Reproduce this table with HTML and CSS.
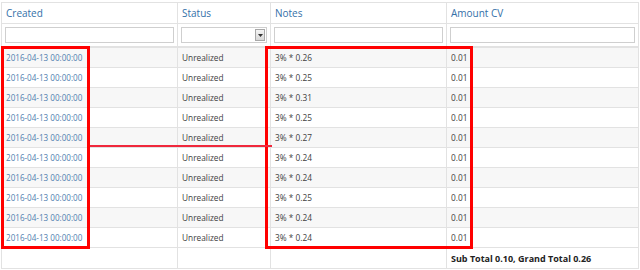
FILE: index.html
```html
<!DOCTYPE html>
<html>
<head>
<meta charset="utf-8">
<link rel="stylesheet" href="styles.css">
</head>
<body>
<div class="wrap">
  <table class="grid">
    <colgroup>
      <col class="c-created"><col class="c-status"><col class="c-notes"><col class="c-amount">
    </colgroup>
    <thead>
      <tr class="head">
        <th>Created</th><th>Status</th><th>Notes</th><th>Amount CV</th>
      </tr>
      <tr class="filters">
        <td><input class="filter" type="text"></td>
        <td><div class="select"><span class="arrow"><svg width="7" height="5" viewBox="0 0 7 5"><path d="M1 1h5L3.5 4z" fill="#333"/></svg></span></div></td>
        <td><input class="filter" type="text"></td>
        <td><input class="filter" type="text"></td>
      </tr>
    </thead>
    <tbody>
      <tr><td><a>2016-04-13 00:00:00</a></td><td>Unrealized</td><td>3% * 0.26</td><td>0.01</td></tr>
      <tr><td><a>2016-04-13 00:00:00</a></td><td>Unrealized</td><td>3% * 0.25</td><td>0.01</td></tr>
      <tr><td><a>2016-04-13 00:00:00</a></td><td>Unrealized</td><td>3% * 0.31</td><td>0.01</td></tr>
      <tr><td><a>2016-04-13 00:00:00</a></td><td>Unrealized</td><td>3% * 0.25</td><td>0.01</td></tr>
      <tr><td><a>2016-04-13 00:00:00</a></td><td>Unrealized</td><td>3% * 0.27</td><td>0.01</td></tr>
      <tr><td><a>2016-04-13 00:00:00</a></td><td>Unrealized</td><td>3% * 0.24</td><td>0.01</td></tr>
      <tr><td><a>2016-04-13 00:00:00</a></td><td>Unrealized</td><td>3% * 0.24</td><td>0.01</td></tr>
      <tr><td><a>2016-04-13 00:00:00</a></td><td>Unrealized</td><td>3% * 0.25</td><td>0.01</td></tr>
      <tr><td><a>2016-04-13 00:00:00</a></td><td>Unrealized</td><td>3% * 0.24</td><td>0.01</td></tr>
      <tr><td><a>2016-04-13 00:00:00</a></td><td>Unrealized</td><td>3% * 0.24</td><td>0.01</td></tr>
    </tbody>
    <tfoot>
      <tr><td></td><td></td><td></td><td class="total">Sub Total 0.10, Grand Total 0.26</td></tr>
    </tfoot>
  </table>
  <div class="mark box-created"></div>
  <div class="mark box-notes"></div>
  <div class="mark link-line"></div>
</div>
</body>
</html>
```
FILE: styles.css
```css
html, body {
  margin: 0;
  padding: 0;
  background: #fff;
}
body {
  font-family: "Open Sans", "Liberation Sans", sans-serif;
  color: #444;
}
.wrap {
  position: relative;
  width: 640px;
  height: 270px;
  padding: 2px 0 0 1px;
  box-sizing: border-box;
}
.grid {
  border-collapse: collapse;
  table-layout: fixed;
  width: 637px;
  border: 1px solid #e2e2e2;
}
.c-created { width: 176px; }
.c-status { width: 93px; }
.c-notes { width: 176px; }
.c-amount { width: 192px; }

.grid th, .grid td {
  border: 1px solid #e2e2e2;
  padding: 0 4px;
  text-align: left;
  white-space: nowrap;
  overflow: hidden;
}
.head th {
  height: 20px;
  font-size: 10px;
  font-weight: normal;
  color: #3470a8;
}
.filters td {
  height: 22px;
  padding: 0 3px;
  border-bottom: 2px solid #e2e2e2;
}
.filter {
  display: block;
  box-sizing: border-box;
  width: 100%;
  height: 16px;
  margin: 0;
  border: 1px solid #cfcfcf;
  background: #fff;
  padding: 0;
}
.select {
  box-sizing: border-box;
  height: 16px;
  border: 1px solid #cfcfcf;
  background: #fff;
  display: flex;
  justify-content: flex-end;
  align-items: center;
  padding-right: 1px;
}
.arrow {
  width: 10px;
  height: 12px;
  box-sizing: border-box;
  border: 1px solid #a8a8a8;
  background: linear-gradient(#f4f4f4, #d8d8d8);
  display: flex;
  align-items: center;
  justify-content: center;
}
tbody td {
  height: 19px;
  font-size: 8.3px;
  color: #404040;
}
tbody tr:nth-child(odd) td {
  background: #f7f7f7;
}
tbody a {
  color: #5080b0;
  font-size: 8.1px;
}
tfoot td {
  height: 20px;
  font-size: 9px;
}
.total {
  font-weight: bold;
  color: #222;
}

.mark {
  position: absolute;
  box-sizing: border-box;
}
.box-created {
  left: 1px;
  top: 46px;
  width: 89px;
  height: 203px;
  border: 3px solid #f00;
}
.box-notes {
  left: 265px;
  top: 46px;
  width: 208px;
  height: 203px;
  border: 3px solid #f00;
}
.link-line {
  left: 90px;
  top: 145px;
  width: 182px;
  height: 2px;
  background: #f0283c;
}
```
